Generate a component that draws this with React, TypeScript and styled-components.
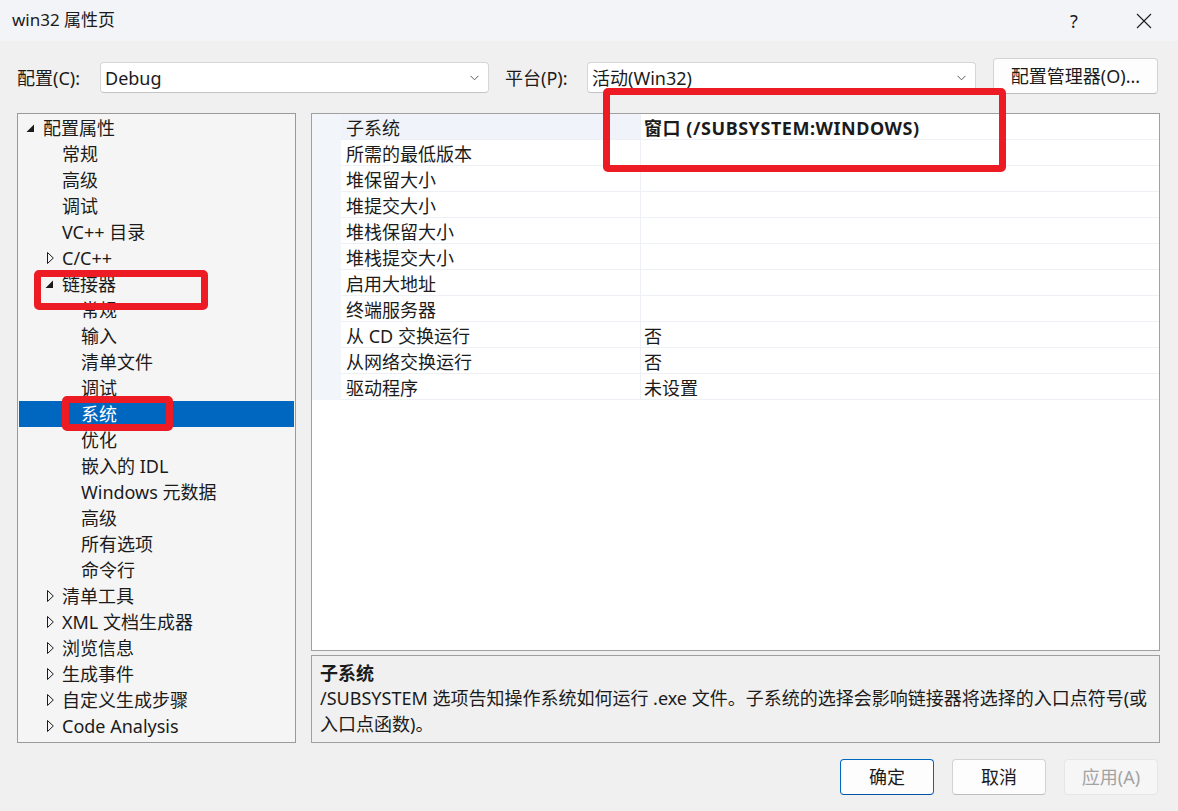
import React from "react";
import styled, { createGlobalStyle } from "styled-components";

const FONT = `"Noto Sans", "Noto Sans CJK SC", sans-serif`;

const Global = createGlobalStyle`
  html, body { margin: 0; padding: 0; background: #f0f0f0; }
  body { font-family: ${FONT}; color: #1b1b1b; }
  * { box-sizing: border-box; }
`;

const Window = styled.div`
  position: relative;
  width: 1178px;
  height: 811px;
  background: #f0f0f0;
  display: flex;
  flex-direction: column;
  font-family: ${FONT};
  font-size: 18px;
  color: #1b1b1b;
  overflow: hidden;
`;

const TitleBar = styled.div`
  height: 41px;
  background: #f3f4f8;
  display: flex;
  align-items: center;
  padding: 0 11px 0 12px;
`;

const Title = styled.div`
  flex: 1;
  font-size: 17px;
  line-height: 22px;
  margin-top: -1px;
`;

const CaptionButton = styled.div`
  width: 46px;
  height: 36px;
  display: flex;
  align-items: center;
  justify-content: center;
  font-size: 18px;
  color: #1b1b1b;
  & + & { margin-left: 24px; }
`;

const Content = styled.div`
  flex: 1;
  display: flex;
  flex-direction: column;
  padding: 0 18px 0 17px;
`;

const ConfigRow = styled.div`
  margin-top: 17px;
  height: 36px;
  display: flex;
  align-items: center;
`;

const FieldLabel = styled.label<{ $w: number; $ml?: number }>`
  width: ${(p) => p.$w}px;
  margin-left: ${(p) => p.$ml ?? 0}px;
  margin-top: 3px;
  white-space: nowrap;
  line-height: 26px;
`;

const Combo = styled.div`
  width: 389px;
  height: 31px;
  margin-top: 3px;
  background: #ffffff;
  border: 1px solid #d6d6d6;
  border-bottom-color: #c4c4c4;
  border-radius: 4px;
  display: flex;
  align-items: center;
  padding: 0 9px 0 4px;
`;

const ComboText = styled.span`
  flex: 1;
  line-height: 26px;
  white-space: nowrap;
`;

const PushButton = styled.button<{ $w: number; $variant?: "default" | "disabled" }>`
  width: ${(p) => p.$w}px;
  height: 36px;
  font-family: ${FONT};
  font-size: 18px;
  line-height: 26px;
  padding: 0;
  border-radius: 4px;
  background: ${(p) => (p.$variant === "disabled" ? "#f6f6f6" : "#fdfdfd")};
  color: ${(p) => (p.$variant === "disabled" ? "#a3a3a3" : "#1b1b1b")};
  border: 1px solid
    ${(p) =>
      p.$variant === "default"
        ? "#0067c0"
        : p.$variant === "disabled"
        ? "#e6e6e6"
        : "#d3d3d3"};
  border-bottom-color: ${(p) =>
    p.$variant === "default" ? "#0055a8" : p.$variant === "disabled" ? "#e6e6e6" : "#bdbdbd"};
  white-space: nowrap;
`;

const ManagerButton = styled(PushButton)`
  margin-left: 17px;
`;

const Main = styled.div`
  margin-top: 19px;
  height: 630px;
  display: grid;
  grid-template-columns: 279px 1fr;
  column-gap: 15px;
`;

const TreePanel = styled.div`
  background: #f5f5f5;
  border: 1px solid #9a9a9a;
  padding: 1px;
  display: flex;
  flex-direction: column;
`;

const TreeRow = styled.div<{ $level: number; $selected?: boolean }>`
  height: 26px;
  display: flex;
  align-items: center;
  padding-left: ${(p) => 6 + p.$level * 19}px;
  background: ${(p) => (p.$selected ? "#0067c0" : "transparent")};
  color: ${(p) => (p.$selected ? "#ffffff" : "#1b1b1b")};
  white-space: nowrap;
`;

const Expander = styled.span`
  width: 18px;
  height: 26px;
  display: flex;
  align-items: center;
  justify-content: flex-end;
  padding-right: 8px;
  flex-shrink: 0;
`;

const TreeText = styled.span`
  line-height: 26px;
`;

const RightColumn = styled.div`
  display: flex;
  flex-direction: column;
  gap: 4px;
`;

const GridPanel = styled.div`
  flex: 1;
  background: #ffffff;
  border: 1px solid #a0a0a0;
  display: flex;
  flex-direction: column;
`;

const PropRow = styled.div`
  display: grid;
  grid-template-columns: 29px 300px 1fr;
  height: 26px;
`;

const Margin = styled.div`
  background: #f2f5fa;
`;

const NameCell = styled.div<{ $active?: boolean }>`
  background: ${(p) => (p.$active ? "#f0f4fa" : "#ffffff")};
  border-right: 1px solid #edf0f5;
  border-bottom: 1px solid #edf0f5;
  padding: 2px 0 0 5px;
  line-height: 24px;
  white-space: nowrap;
  overflow: hidden;
`;

const ValueCell = styled.div<{ $bold?: boolean }>`
  border-bottom: 1px solid #edf0f5;
  padding: 2px 0 0 3px;
  line-height: 24px;
  font-weight: ${(p) => (p.$bold ? 700 : 400)};
  letter-spacing: ${(p) => (p.$bold ? "0.55px" : "0")};
  white-space: nowrap;
  overflow: hidden;
`;

const DescPanel = styled.div`
  height: 88px;
  background: #f0f0f0;
  border: 1px solid #a0a0a0;
  padding: 4px 8px 0 8px;
`;

const DescTitle = styled.div`
  font-weight: 700;
  line-height: 26px;
`;

const DescLine = styled.div`
  line-height: 25.5px;
  white-space: nowrap;
`;

const Footer = styled.div`
  margin-top: 16px;
  display: flex;
  justify-content: flex-end;
  gap: 18px;
  padding-right: 2px;
`;

const Annotation = styled.div<{ $x: number; $y: number; $w: number; $h: number }>`
  position: absolute;
  left: ${(p) => p.$x}px;
  top: ${(p) => p.$y}px;
  width: ${(p) => p.$w}px;
  height: ${(p) => p.$h}px;
  border: 7px solid #ed1c24;
  border-radius: 5px;
  pointer-events: none;
`;

const Chevron = () => (
  <svg width="9" height="6" viewBox="0 0 9 6">
    <polyline points="0.5,0.8 4.5,4.8 8.5,0.8" fill="none" stroke="#5a5a5a" strokeWidth="1" />
  </svg>
);

const OpenArrow = () => (
  <svg width="9" height="9" viewBox="0 0 9 9">
    <polygon points="8,0.5 8,8 0.5,8" fill="#1b1b1b" />
  </svg>
);

const ClosedArrow = () => (
  <svg width="8" height="12" viewBox="0 0 8 12">
    <polygon points="1.5,0.5 7.3,6 1.5,11.5" fill="none" stroke="#1b1b1b" strokeWidth="1" />
  </svg>
);

const CloseIcon = () => (
  <svg width="16" height="16" viewBox="0 0 16 16">
    <path d="M1 1 L15 15 M15 1 L1 15" stroke="#1b1b1b" strokeWidth="1.1" />
  </svg>
);

type TreeItem = {
  label: string;
  level: number;
  expander?: "open" | "closed";
  selected?: boolean;
};

const treeItems: TreeItem[] = [
  { label: "配置属性", level: 0, expander: "open" },
  { label: "常规", level: 1 },
  { label: "高级", level: 1 },
  { label: "调试", level: 1 },
  { label: "VC++ 目录", level: 1 },
  { label: "C/C++", level: 1, expander: "closed" },
  { label: "链接器", level: 1, expander: "open" },
  { label: "常规", level: 2 },
  { label: "输入", level: 2 },
  { label: "清单文件", level: 2 },
  { label: "调试", level: 2 },
  { label: "系统", level: 2, selected: true },
  { label: "优化", level: 2 },
  { label: "嵌入的 IDL", level: 2 },
  { label: "Windows 元数据", level: 2 },
  { label: "高级", level: 2 },
  { label: "所有选项", level: 2 },
  { label: "命令行", level: 2 },
  { label: "清单工具", level: 1, expander: "closed" },
  { label: "XML 文档生成器", level: 1, expander: "closed" },
  { label: "浏览信息", level: 1, expander: "closed" },
  { label: "生成事件", level: 1, expander: "closed" },
  { label: "自定义生成步骤", level: 1, expander: "closed" },
  { label: "Code Analysis", level: 1, expander: "closed" },
];

type Prop = { name: string; value?: string; bold?: boolean };

const props: Prop[] = [
  { name: "子系统", value: "窗口 (/SUBSYSTEM:WINDOWS)", bold: true },
  { name: "所需的最低版本" },
  { name: "堆保留大小" },
  { name: "堆提交大小" },
  { name: "堆栈保留大小" },
  { name: "堆栈提交大小" },
  { name: "启用大地址" },
  { name: "终端服务器" },
  { name: "从 CD 交换运行", value: "否" },
  { name: "从网络交换运行", value: "否" },
  { name: "驱动程序", value: "未设置" },
];

export default function App() {
  return (
    <>
      <Global />
      <Window>
        <TitleBar>
          <Title>win32 属性页</Title>
          <CaptionButton>?</CaptionButton>
          <CaptionButton>
            <CloseIcon />
          </CaptionButton>
        </TitleBar>
        <Content>
          <ConfigRow>
            <FieldLabel $w={83}>配置(C):</FieldLabel>
            <Combo>
              <ComboText>Debug</ComboText>
              <Chevron />
            </Combo>
            <FieldLabel $w={82} $ml={16}>
              平台(P):
            </FieldLabel>
            <Combo>
              <ComboText>活动(Win32)</ComboText>
              <Chevron />
            </Combo>
            <ManagerButton $w={165}>配置管理器(O)...</ManagerButton>
          </ConfigRow>
          <Main>
            <TreePanel>
              {treeItems.map((item, i) => (
                <TreeRow key={i} $level={item.level} $selected={item.selected}>
                  <Expander>
                    {item.expander === "open" && <OpenArrow />}
                    {item.expander === "closed" && <ClosedArrow />}
                  </Expander>
                  <TreeText>{item.label}</TreeText>
                </TreeRow>
              ))}
            </TreePanel>
            <RightColumn>
              <GridPanel>
                {props.map((p, i) => (
                  <PropRow key={i}>
                    <Margin />
                    <NameCell $active={i === 0}>{p.name}</NameCell>
                    <ValueCell $bold={p.bold}>{p.value ?? ""}</ValueCell>
                  </PropRow>
                ))}
              </GridPanel>
              <DescPanel>
                <DescTitle>子系统</DescTitle>
                <DescLine>
                  /SUBSYSTEM 选项告知操作系统如何运行 .exe 文件。子系统的选择会影响链接器将选择的入口点符号(或
                </DescLine>
                <DescLine>入口点函数)。</DescLine>
              </DescPanel>
            </RightColumn>
          </Main>
          <Footer>
            <PushButton $w={94} $variant="default">
              确定
            </PushButton>
            <PushButton $w={94}>取消</PushButton>
            <PushButton $w={94} $variant="disabled">
              应用(A)
            </PushButton>
          </Footer>
        </Content>
        <Annotation $x={603} $y={88} $w={403} $h={84} />
        <Annotation $x={34} $y={270} $w={174} $h={40} />
        <Annotation $x={62} $y={396} $w={111} $h={35} />
      </Window>
    </>
  );
}
